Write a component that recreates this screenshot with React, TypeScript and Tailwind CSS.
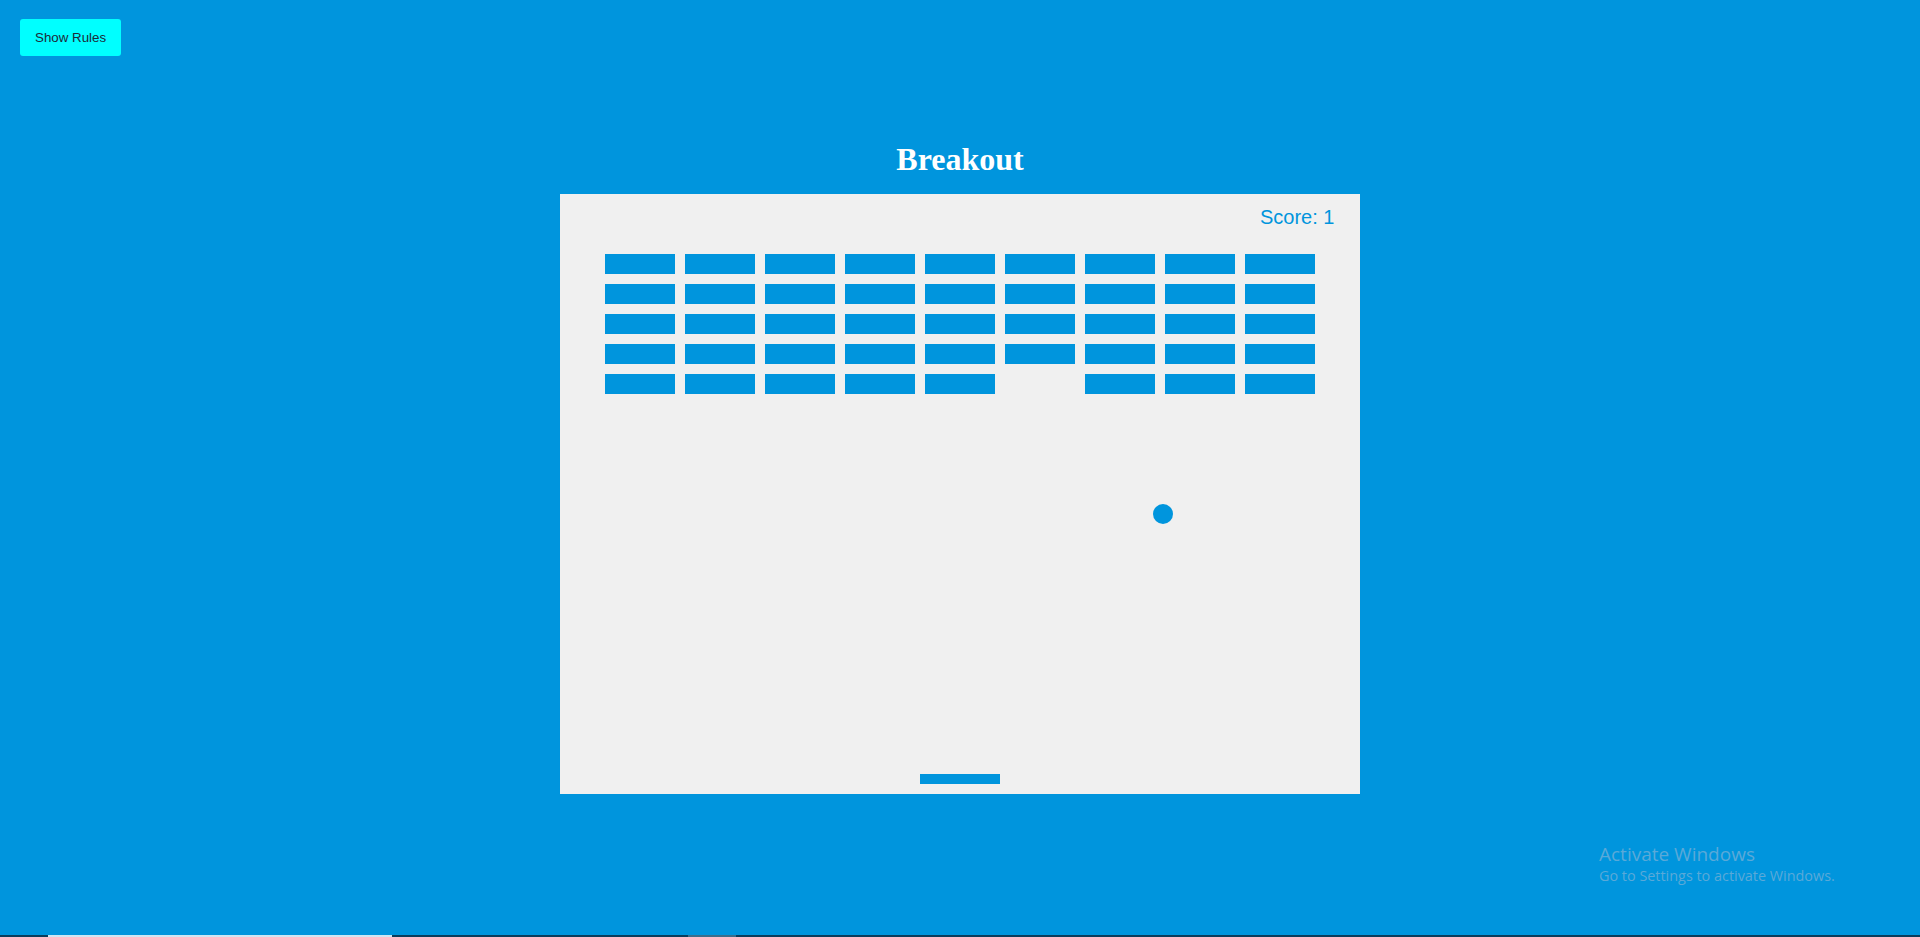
import { useState } from 'react'

const COLS = 9
const ROWS = 5

// bricks that have already been hit: "row-col"
const broken = new Set(['4-5'])

function Brick({ visible }: { visible: boolean }) {
  return <div className={visible ? 'bg-[#0095dd]' : 'bg-transparent'} />
}

export default function App() {
  const [showRules, setShowRules] = useState(false)
  const score = 1

  const bricks = []
  for (let r = 0; r < ROWS; r++) {
    for (let c = 0; c < COLS; c++) {
      bricks.push(<Brick key={`${r}-${c}`} visible={!broken.has(`${r}-${c}`)} />)
    }
  }

  return (
    <div className="relative h-screen overflow-hidden bg-[#0095dd] flex flex-col items-center">
      <button
        onClick={() => setShowRules((s) => !s)}
        className="self-start ml-5 mt-[19px] px-[15px] py-[10px] rounded-[3px] bg-[#00ffff] text-[#1e2a38] text-[13.33px] leading-[17px] cursor-pointer"
        style={{ fontFamily: '"Liberation Sans", Arial, sans-serif' }}
      >
        {showRules ? 'Hide Rules' : 'Show Rules'}
      </button>

      <h1
        className="mt-[85px] text-[32px] leading-[36px] font-bold text-white"
        style={{ fontFamily: '"Liberation Serif", "Times New Roman", serif' }}
      >
        Breakout
      </h1>

      <div className="relative mt-[17px] w-[800px] h-[600px] bg-[#f0f0f0] pt-[60px] pl-[45px]">
        <div className="grid grid-cols-[repeat(9,70px)] auto-rows-[20px] gap-[10px]">{bricks}</div>

        <span
          className="absolute left-[700px] top-[13px] text-[20px] leading-[20px] text-[#0095dd] whitespace-nowrap"
          style={{ fontFamily: '"Liberation Sans", Arial, sans-serif' }}
        >
          Score: {score}
        </span>

        {/* ball */}
        <div className="absolute left-[593px] top-[310px] w-5 h-5 rounded-full bg-[#0095dd]" />
        {/* paddle */}
        <div className="absolute left-[360px] top-[580px] w-20 h-[10px] bg-[#0095dd]" />
      </div>

      {/* windows watermark */}
      <div
        className="absolute left-[1599px] top-[841px] text-[#5aa9d8] pointer-events-none"
        style={{ fontFamily: '"Open Sans", "Noto Sans", sans-serif' }}
      >
        <div className="text-[19px] leading-[26px]">Activate Windows</div>
        <div className="text-[14.4px] leading-[18px]">Go to Settings to activate Windows.</div>
      </div>

      {/* taskbar edge */}
      <div className="absolute bottom-0 left-0 right-0 h-[2px] flex bg-[#0b3d5c]">
        <div className="ml-[48px] w-[344px] bg-[#cfe6f3]" />
        <div className="ml-[296px] w-[48px] bg-[#3b6e8c]" />
      </div>
    </div>
  )
}
